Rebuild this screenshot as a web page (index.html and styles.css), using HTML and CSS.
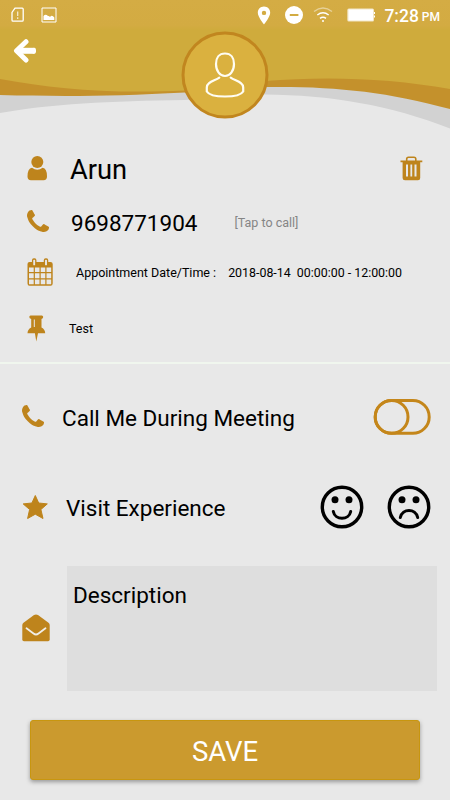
FILE: index.html
```html
<!DOCTYPE html>
<html lang="en">
<head>
    <meta charset="UTF-8">
    <meta name="viewport" content="width=device-width, initial-scale=1.0">
    <title>Appointment</title>
    <link rel="stylesheet" href="styles.css">
</head>
<body>
    <header class="header">
        <svg class="waves" viewBox="0 0 450 140">
            <path fill="#d2d2d2" d="M0 85H450V128.500C390 105 330 95 265 94.500L185 100C110 101 50 104 0 113Z"/>
            <path fill="#c4912c" d="M0 70H450V109C385 91 330 86 265 87L185 92.500C110 96.500 60 96.500 0 95Z"/>
            <path fill="#cfab3c" d="M0 0H450V89C390 78 325 76 265 81L185 90.500C110 94 55 89 0 79Z"/>
        </svg>
        <div class="status-bar">
            <svg class="sim" width="14" height="16" viewBox="0 0 14 16" fill="none" stroke="#fff">
                <path stroke-width="1.300" d="M4 1.200H11.200Q12.200 1.200 12.200 2.200V13Q12.200 14.200 11.200 14.200H2Q1 14.200 1 13V5.500Z"/>
                <path stroke-width="1.200" opacity="0.800" d="M6.700 4.500V9M6.700 10.200V12"/>
            </svg>
            <svg class="photo" width="16" height="16" viewBox="0 0 16 16">
                <path fill="none" stroke="#fff" d="M1 1H15V15H1Z"/>
                <path fill="#fff" d="M2.500 13V9Q4.500 6.500 7 9Q8 8.500 9 10Q11 7.500 13.300 10.500V13Z"/>
            </svg>
            <div class="status-right">
                <svg class="pin-status" width="14" height="19" viewBox="0 0 14 19">
                    <path fill="#fff" fill-rule="evenodd" d="M7 0.500C3.300 0.500 0.800 3.300 0.800 6.800C0.800 11 7 18.500 7 18.500S13.200 11 13.200 6.800C13.200 3.300 10.700 0.500 7 0.500ZM7 4.700A2.200 2.200 0 1 1 7 9.100A2.200 2.200 0 0 1 7 4.700Z"/>
                </svg>
                <svg class="dnd" width="18" height="18" viewBox="0 0 18 18">
                    <circle cx="9" cy="9" r="9" fill="#fff"/>
                    <path stroke="#d2ab42" stroke-width="2" d="M4.800 9H13.400"/>
                </svg>
                <svg class="wifi" width="20" height="16" viewBox="0 0 20 16" fill="none" stroke="#fff" stroke-width="1.500">
                    <path opacity="0.450" d="M1 4.500Q10 -2.500 19 4.500"/>
                    <path d="M4.300 8Q10 3.700 15.700 8M7 11.300Q10 9 13 11.300"/>
                    <circle cx="10" cy="14" r="1" fill="#fff" stroke="none"/>
                </svg>
                <svg class="battery" width="28" height="14" viewBox="0 0 28 14">
                    <rect x="0.300" y="0.500" width="26.700" height="13" rx="1.500" fill="#fff" opacity="0.700"/>
                    <rect x="1.500" y="1.500" width="24.500" height="11" fill="#fff"/>
                    <path stroke="#fff" stroke-dasharray="2 1.500" d="M27.500 4V11"/>
                </svg>
                <span class="time">7:28</span>
                <span class="ampm">PM</span>
            </div>
        </div>
        <a class="back" href="#">
            <svg width="24" height="24" viewBox="0 0 24 24" fill="none" stroke="#fff" stroke-linecap="round" stroke-linejoin="round">
                <path stroke-width="5" d="M13 2.700L3.500 11.800L13 21"/>
                <path stroke-width="6" stroke-linecap="butt" d="M4 11.800H21.500"/>
                <path stroke-width="4" d="M21 10.800V12.800"/>
            </svg>
        </a>
        <div class="avatar">
            <svg width="90" height="90" viewBox="0 0 90 90">
                <circle cx="45" cy="45" r="42" fill="#dab13f" stroke="#c1861f" stroke-width="3"/>
                <g fill="none" stroke="#fffdf3" stroke-width="2.200" stroke-linecap="round">
                    <path d="M45 23.500C39 23.500 36 28 36 34C36 41 40 46 45 46S54 41 54 34C54 28 51 23.500 45 23.500Z"/>
                    <path d="M39.300 47.700C35 51 26.800 51.500 26.800 57.500V61.500C31 68.200 59 68.200 63.200 61.500V57.500C63.200 51.500 55 51 50.700 47.700"/>
                </g>
            </svg>
        </div>
    </header>

    <section class="details">
        <div class="row name-row">
            <svg width="21" height="26" viewBox="0 0 21 26" fill="#be841c">
                <circle cx="10.300" cy="7" r="6"/>
                <path d="M5 12.800Q10.300 16.500 15.600 12.800Q20 13.300 20 21.500Q20 25.200 16.500 25.200H4Q0.500 25.200 0.500 21.500Q0.500 13.300 5 12.800Z"/>
            </svg>
            <span class="name">Arun</span>
            <svg class="trash" width="23" height="25" viewBox="0 0 23 25">
                <path fill="none" stroke="#be841c" stroke-width="1.600" d="M6.700 5V3Q6.700 1.300 8.500 1.300H14Q15.800 1.300 15.800 3V5"/>
                <path fill="#be841c" fill-rule="evenodd" d="M0.500 4.400H22.300V6.300H20.200V22Q20.200 24.300 18 24.300H5Q2.600 24.300 2.600 22V6.300H0.500ZM6 8.500V20.500H8V8.500ZM10.400 8.500V20.500H12.200V8.500ZM14.500 8.500V20.500H16.500V8.500Z"/>
            </svg>
        </div>
        <div class="row phone-row">
            <svg class="raised" width="22" height="22" viewBox="0 128 1408 1408" fill="#be841c">
                <path d="M1408 1240q0 27-10 70.500t-20.500 68.500q-21 50-122 106-94 51-186 51-27 0-53-3.500t-57.500-12.500-47-14.500-55.500-20.500-49-18q-98-35-175-83-127-79-264-216t-216-264q-48-77-83-175-3-9-18-49t-20.500-55.500-14.500-47-12.500-57.500-3.500-53q0-92 51-186 56-101 106-122 25-10 68.500-20.500t70.500-10.500q14 0 21 3 18 6 53 76 11 19 30 54t35 63.500 31 53.500q3 4 17.500 25t21.500 35.500 7 28.500q0 20-28.500 50t-62 55-62 53-28.500 46q0 9 5 22.500t8.500 20.500 14 24 11.500 19q76 137 174 235t235 174q2 1 19 11.500t24 14 20.500 8.500 22.500 5q18 0 46-28.500t53-62 55-62 50-28.500q14 0 28.500 7t35.500 21.500 25 17.500q25 15 53.500 31t63.500 35 54 30q70 35 76 53 3 7 3 21z"/>
            </svg>
            <span class="phone">9698771904</span>
            <span class="tap">[Tap to call]</span>
        </div>
        <div class="row date-row">
            <svg width="26" height="28" viewBox="0 0 26 28">
                <path fill="#be841c" fill-rule="evenodd" d="M2.500 4H23.500Q25.700 4 25.700 6V25.500Q25.700 27.700 23.500 27.700H2.500Q0.500 27.700 0.500 25.500V6Q0.500 4 2.500 4ZM2 9.500V14H6.700V9.500ZM7.900 9.500V14H12.500V9.500ZM13.700 9.500V14H18.300V9.500ZM19.500 9.500V14H24.200V9.500ZM2 15.200V20.200H6.700V15.200ZM7.900 15.200V20.200H12.500V15.200ZM13.700 15.200V20.200H18.300V15.200ZM19.500 15.200V20.200H24.200V15.200ZM2 21.400V26.200H6.700V21.400ZM7.900 21.400V26.200H12.500V21.400ZM13.700 21.400V26.200H18.300V21.400ZM19.500 21.400V26.200H24.200V21.400Z"/>
                <g fill="#e8e8e8" stroke="#be841c" stroke-width="1.300">
                    <rect x="5.600" y="1" width="3.200" height="7" rx="1.300"/>
                    <rect x="17.400" y="1" width="3.200" height="7" rx="1.300"/>
                </g>
            </svg>
            <span class="label">Appointment Date/Time :</span>
            <span class="value">2018-08-14&nbsp; 00:00:00 - 12:00:00</span>
        </div>
        <div class="row note-row">
            <svg width="19" height="27" viewBox="0 0 19 27">
                <path fill="#be841c" d="M3.500 0.500H14.800Q16.200 0.500 16.200 2Q16.200 3.500 14.500 4V12.500Q18.200 14.500 18.200 18.300H11L9.300 26.500L7.900 18.300H0.500Q0.500 14.500 4.200 12.500V4Q2.300 3.500 2.300 2Q2.300 0.500 3.500 0.500Z"/>
                <path stroke="#e8e8e8" d="M7.300 4.500V12"/>
            </svg>
            <span class="note">Test</span>
        </div>
    </section>

    <section class="feedback">
        <div class="row call-row">
            <svg class="raised" width="22" height="22" viewBox="0 128 1408 1408" fill="#be841c">
                <path d="M1408 1240q0 27-10 70.500t-20.500 68.500q-21 50-122 106-94 51-186 51-27 0-53-3.500t-57.500-12.500-47-14.500-55.500-20.500-49-18q-98-35-175-83-127-79-264-216t-216-264q-48-77-83-175-3-9-18-49t-20.500-55.500-14.500-47-12.500-57.500-3.500-53q0-92 51-186 56-101 106-122 25-10 68.500-20.500t70.500-10.500q14 0 21 3 18 6 53 76 11 19 30 54t35 63.500 31 53.500q3 4 17.500 25t21.500 35.500 7 28.500q0 20-28.500 50t-62 55-62 53-28.500 46q0 9 5 22.500t8.500 20.500 14 24 11.500 19q76 137 174 235t235 174q2 1 19 11.500t24 14 20.500 8.500 22.500 5q18 0 46-28.500t53-62 55-62 50-28.500q14 0 28.500 7t35.500 21.500 25 17.500q25 15 53.500 31t63.500 35 54 30q70 35 76 53 3 7 3 21z"/>
            </svg>
            <span class="title">Call Me During Meeting</span>
            <svg class="toggle" width="58" height="36" viewBox="0 0 58 36" fill="none" stroke="#c4861a" stroke-width="3">
                <rect x="2.200" y="1.500" width="54" height="32.800" rx="16.400"/>
                <circle cx="18.600" cy="17.900" r="16.400"/>
            </svg>
        </div>
        <div class="row rate-row">
            <svg width="27" height="26" viewBox="0 0 27 26">
                <path fill="#be841c" stroke="#be841c" stroke-linejoin="round" d="M13.300 1.500L16.700 9L25.300 9.900L18.900 15.500L21 24.500L13.300 20.200L5.600 24.500L7.600 15.500L1.200 9.900L9.900 9Z"/>
            </svg>
            <span class="title">Visit Experience</span>
            <div class="faces">
                <svg width="44" height="44" viewBox="0 0 44 44">
                    <circle cx="22" cy="22" r="19.700" fill="none" stroke="#000" stroke-width="3.400"/>
                    <circle cx="15" cy="14.700" r="3.500"/>
                    <circle cx="29" cy="14.700" r="3.500"/>
                    <path fill="none" stroke="#000" stroke-width="3" stroke-linecap="round" d="M13.300 26.500C15 35.500 29 35.500 30.700 26.500"/>
                </svg>
                <svg width="44" height="44" viewBox="0 0 44 44">
                    <circle cx="22" cy="22" r="19.700" fill="none" stroke="#000" stroke-width="3.400"/>
                    <circle cx="15" cy="14.700" r="3.500"/>
                    <circle cx="29" cy="14.700" r="3.500"/>
                    <path fill="none" stroke="#000" stroke-width="3" stroke-linecap="round" d="M13.300 32.500C15.500 23.200 28.500 23.200 30.700 32.500"/>
                </svg>
            </div>
        </div>
        <div class="row desc-row">
            <svg class="mail" width="28" height="28" viewBox="0 0 28 28">
                <path fill="#be841c" d="M0.300 11Q0.300 9.600 1.500 8.700L12 1Q14 -0.200 16 1L26.500 8.700Q27.700 9.600 27.700 11V25.500Q27.700 27.300 26 27.300H2Q0.300 27.300 0.300 25.500Z"/>
                <path fill="none" stroke="#f0eee8" stroke-width="1.800" stroke-linecap="round" d="M4.500 14.300L11.500 19.500Q14 21.500 16.500 19.500L23.500 14.300"/>
            </svg>
            <div class="description">Description</div>
        </div>
        <button class="save">SAVE</button>
    </section>
</body>
</html>
```
FILE: styles.css
```css
* {
    box-sizing: border-box;
}

body {
    margin: 0;
    width: 450px;
    height: 800px;
    overflow: hidden;
    background-color: #e8e8e8;
    font-family: Roboto, "Liberation Sans", sans-serif;
    color: #000;
}

svg {
    display: block;
    flex-shrink: 0;
}

/* Header */
.header {
    position: relative;
    height: 140px;
}

.waves {
    position: absolute;
    top: 0;
    left: 0;
    width: 450px;
    height: 140px;
}

.status-bar {
    position: relative;
    display: flex;
    align-items: center;
    height: 30px;
    padding-left: 11px;
    background: linear-gradient(#d4ac44, #d3ab42 85%, #cfab3c);
    color: #fff;
}

.photo {
    margin-left: 16px;
}

.status-right {
    display: flex;
    align-items: center;
    margin-left: auto;
    padding-right: 10px;
}

.dnd {
    margin-left: 14px;
}

.wifi {
    margin-left: 10px;
}

.battery {
    margin-left: 14px;
    margin-right: 9px;
}

.time {
    font-size: 17.5px;
    font-weight: 500;
    line-height: 30px;
    margin-top: 1px;
}

.ampm {
    font-size: 12px;
    font-weight: 500;
    line-height: 30px;
    margin-left: 3px;
    margin-top: 4px;
}

.back {
    position: relative;
    display: inline-block;
    margin: 9px 0 0 13px;
}

.avatar {
    position: absolute;
    top: 30px;
    left: 180px;
}

/* Visitor details */
.row {
    display: flex;
    align-items: center;
}

.details {
    height: 224px;
    padding: 0 27px;
    border-bottom: 2px solid #f0f6ee;
}

.name-row {
    height: 56px;
}

.name {
    margin-left: 22px;
    margin-top: 4px;
    font-size: 27.3px;
}

.trash {
    margin-left: auto;
}

.phone-row {
    height: 52px;
}

.phone {
    margin-left: 22px;
    margin-top: 1px;
    font-size: 22.5px;
}

.tap {
    margin-left: 37px;
    font-size: 12.5px;
    color: #858585;
}

.date-row {
    height: 47px;
    font-size: 12.5px;
}

.label {
    margin-left: 23px;
    margin-top: 1px;
}

.value {
    margin-left: 12px;
    margin-top: 1px;
    font-size: 12.4px;
}

.note-row {
    height: 66px;
}

.note {
    margin-left: 23px;
    font-size: 12.5px;
}

/* Feedback form */
.feedback {
    padding: 0 13px 0 22px;
}

.title {
    font-size: 22.5px;
    margin-top: 2px;
}

.call-row {
    height: 106px;
    gap: 18px;
}

.raised {
    margin-bottom: 2px;
}

.toggle {
    margin-left: auto;
    margin-right: 6px;
    margin-bottom: 1px;
}

.rate-row {
    height: 74px;
    gap: 17px;
}

.faces {
    display: flex;
    gap: 23px;
    margin-left: auto;
    margin-right: 6px;
}

.desc-row {
    margin-top: 22px;
    gap: 17px;
}

.description {
    width: 370px;
    height: 125px;
    padding: 16px 6px;
    background-color: #dedede;
    font-size: 22.5px;
}

.mail {
    margin-bottom: 2px;
}

.save {
    display: block;
    width: 390px;
    height: 60px;
    margin: 29px 0 0 8px;
    padding: 2px 0 0;
    border: 1px solid #c8960f;
    border-radius: 3px;
    background-color: #cb9a2e;
    box-shadow: 0 2px 4px rgba(0, 0, 0, 0.35);
    color: #fff;
    font-family: inherit;
    font-size: 27.5px;
}
```
